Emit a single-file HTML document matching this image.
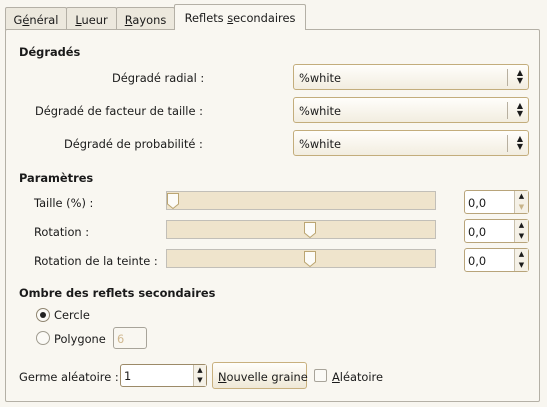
<!DOCTYPE html>
<html><head><meta charset="utf-8"><style>
*{box-sizing:border-box}
body{margin:0;width:547px;height:407px;background:#f8f6f0;font-family:"DejaVu Sans","Liberation Sans",sans-serif;font-size:11.4px;color:#1a1a1a;position:relative;overflow:hidden}
.a{position:absolute;white-space:nowrap}
.tab{position:absolute;top:7px;height:23px;border:1px solid #b4b0a6;border-bottom:none;background:#ece8dd;padding:5px 0 0 0;text-align:center;border-radius:2px 2px 0 0}
.panel{position:absolute;left:5px;top:29px;width:535px;height:373px;border:1px solid #b4b0a6;border-radius:2px;background:#f9f7f1}
.b{font-weight:bold}
.combo{position:absolute;left:293px;width:236px;height:26px;border:1px solid #c3ad7c;border-radius:3px;background:linear-gradient(#fffefb,#f2ede0);padding:6px 0 0 5px}
.combo .sep{position:absolute;right:20px;top:4px;height:17px;border-left:1px solid #b8b0a0}
.combo .ar{position:absolute;right:5px;top:4px;font-size:8px;line-height:8px;text-align:center}
.trough{position:absolute;left:166px;width:270px;height:19px;border:1px solid #c2bfb8;background:#efe4cc}
.thumb{position:absolute;top:1px;width:12px;height:16px}
.spin{position:absolute;left:464px;width:65px;height:24px;border:1px solid #b8a47a;border-radius:3px;background:#fff;padding:5px 0 0 3px}
.spin .bt{position:absolute;right:0;top:0;width:14px;height:22px;border-left:1px solid #c8c0ac;background:#f5f1e7;font-size:7px;line-height:11px;text-align:center}
.radio{position:absolute;width:14px;height:14px;border:1px solid #a09c90;border-radius:50%;background:#fbfaf6}
</style></head><body>
<div class="tab" style="left:5px;width:62px">G<u>é</u>néral</div>
<div class="tab" style="left:66px;width:51px"><u>L</u>ueur</div>
<div class="tab" style="left:116px;width:59px"><u>R</u>ayons</div>
<div class="panel"></div>
<div class="tab" style="left:174px;top:4px;height:26px;width:132px;background:#f9f7f1;z-index:2;padding-top:6px">Reflets <u>s</u>econdaires</div>

<div class="a b" style="left:19px;top:45px">Dégradés</div>
<div class="a" style="left:112px;top:71px">Dégradé radial :</div>
<div class="a" style="left:35px;top:104px">Dégradé de facteur de taille :</div>
<div class="a" style="left:64px;top:137px">Dégradé de probabilité :</div>
<div class="combo" style="top:64px">%white<span class="sep"></span><span class="ar">▲<br>▼</span></div>
<div class="combo" style="top:97px">%white<span class="sep"></span><span class="ar">▲<br>▼</span></div>
<div class="combo" style="top:130px">%white<span class="sep"></span><span class="ar">▲<br>▼</span></div>

<div class="a b" style="left:19px;top:171px">Paramètres</div>
<div class="a" style="left:34px;top:196px">Taille (%) :</div>
<div class="a" style="left:34px;top:225px">Rotation :</div>
<div class="a" style="left:34px;top:254px">Rotation de la teinte :</div>
<div class="trough" style="top:191px"><svg class="thumb" style="left:0" viewBox="0 0 12 16"><path d="M.5 .5H11.5V11L6 15.5.5 11Z" fill="#fcfbf7" stroke="#bba572"/></svg></div>
<div class="trough" style="top:220px"><svg class="thumb" style="left:137px" viewBox="0 0 12 16"><path d="M.5 .5H11.5V11L6 15.5.5 11Z" fill="#fcfbf7" stroke="#bba572"/></svg></div>
<div class="trough" style="top:249px"><svg class="thumb" style="left:137px" viewBox="0 0 12 16"><path d="M.5 .5H11.5V11L6 15.5.5 11Z" fill="#fcfbf7" stroke="#bba572"/></svg></div>
<div class="spin" style="top:190px">0,0<div class="bt">▲<br><span style="color:#c8b48a">▼</span></div></div>
<div class="spin" style="top:219px">0,0<div class="bt">▲<br>▼</div></div>
<div class="spin" style="top:248px">0,0<div class="bt">▲<br>▼</div></div>

<div class="a b" style="left:19px;top:286px">Ombre des reflets secondaires</div>
<div class="radio" style="left:36px;top:308px;border-color:#8f8570"><div style="position:absolute;left:3px;top:3px;width:6px;height:6px;border-radius:50%;background:#222"></div></div>
<div class="a" style="left:54px;top:308px">Cercle</div>
<div class="radio" style="left:36px;top:331px"></div>
<div class="a" style="left:54px;top:332px">Polygone</div>
<div class="a" style="left:113px;top:327px;width:34px;height:22px;border:1px solid #a8a49a;border-radius:3px;padding:4px 0 0 3px;color:#d0b890">6</div>

<div class="a" style="left:19px;top:370px">Germe aléatoire :</div>
<div class="a" style="left:120px;top:364px;width:87px;height:23px;border:1px solid #9c8a68;border-radius:3px;background:#fff;padding:4px 0 0 3px">1<div style="position:absolute;right:0;top:0;width:13px;height:21px;border-left:1px solid #c8c0ac;background:#f5f1e7;font-size:7px;line-height:10px;text-align:center">▲<br>▼</div></div>
<div class="a" style="left:212px;top:362px;width:95px;height:27px;border:1px solid #c8b07e;border-radius:3px;background:linear-gradient(#fffefb,#efe8d6);padding:7px 0 0 5px"><u>N</u>ouvelle graine</div>
<div class="a" style="left:314px;top:369px;width:13px;height:13px;border:1px solid #a8a49a;border-radius:2px;background:#fbfaf6"></div>
<div class="a" style="left:332px;top:370px"><u>A</u>léatoire</div>
</body></html>
